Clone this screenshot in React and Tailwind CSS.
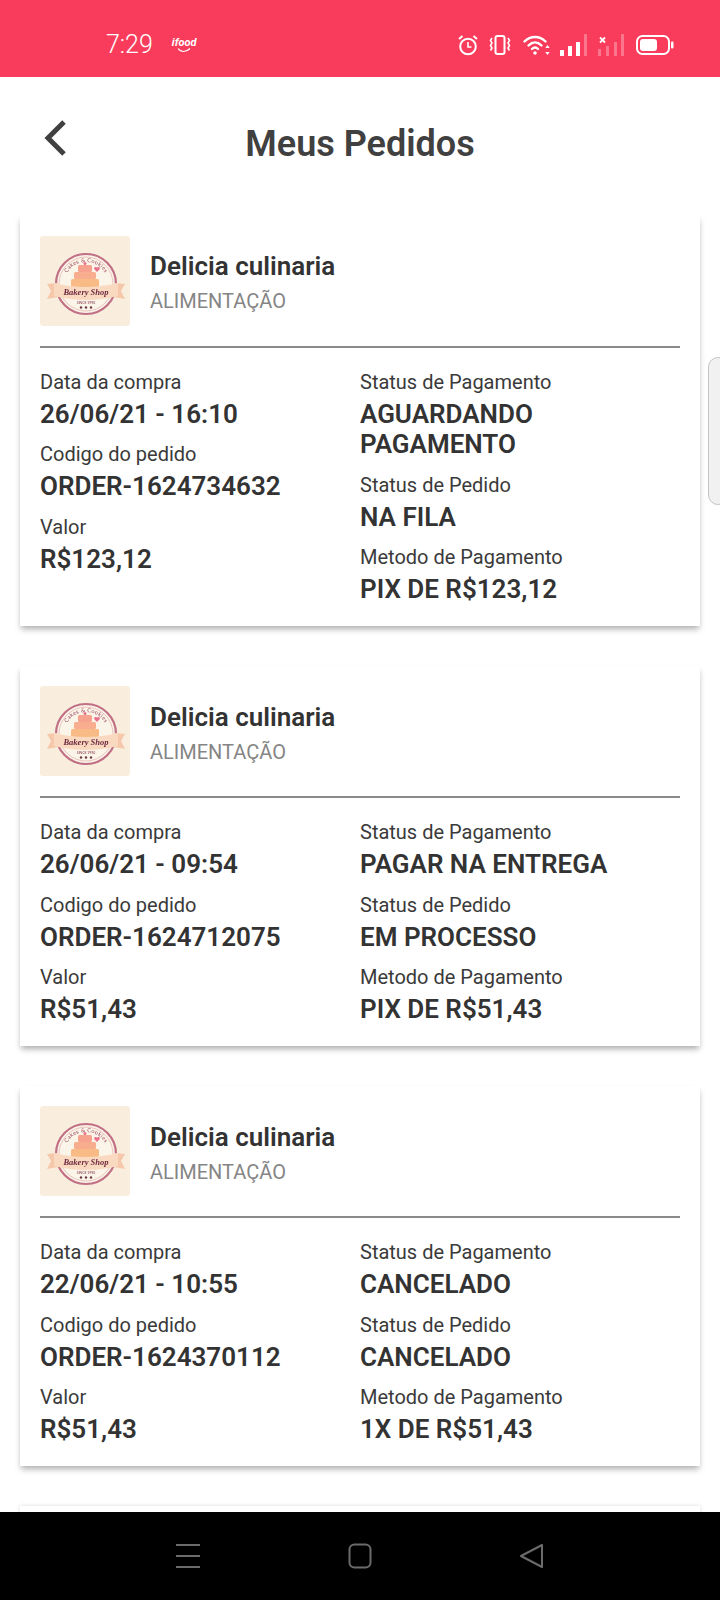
const orders = [
  {
    left: [
      ["Data da compra", "26/06/21 - 16:10"],
      ["Codigo do pedido", "ORDER-1624734632"],
      ["Valor", "R$123,12"],
    ],
    right: [
      ["Status de Pagamento", "AGUARDANDO PAGAMENTO"],
      ["Status de Pedido", "NA FILA"],
      ["Metodo de Pagamento", "PIX DE R$123,12"],
    ],
  },
  {
    left: [
      ["Data da compra", "26/06/21 - 09:54"],
      ["Codigo do pedido", "ORDER-1624712075"],
      ["Valor", "R$51,43"],
    ],
    right: [
      ["Status de Pagamento", "PAGAR NA ENTREGA"],
      ["Status de Pedido", "EM PROCESSO"],
      ["Metodo de Pagamento", "PIX DE R$51,43"],
    ],
  },
  {
    left: [
      ["Data da compra", "22/06/21 - 10:55"],
      ["Codigo do pedido", "ORDER-1624370112"],
      ["Valor", "R$51,43"],
    ],
    right: [
      ["Status de Pagamento", "CANCELADO"],
      ["Status de Pedido", "CANCELADO"],
      ["Metodo de Pagamento", "1X DE R$51,43"],
    ],
  },
];

function BakeryLogo({ id }) {
  return (
    <div className="w-[90px] h-[90px] shrink-0 rounded-[3px] bg-[#f9eedd]">
      <svg viewBox="0 0 90 90" className="w-full h-full blur-[0.35px]">
        <circle cx="46" cy="48" r="30" fill="#fbf4e8" stroke="#c06f85" strokeWidth="2.2" />
        <circle cx="46" cy="48" r="27" fill="none" stroke="#e3b0ad" strokeWidth="0.7" />
        <path id={id} d="M24 48 A22 22 0 0 1 68 48" fill="none" />
        <text fontSize="5.6" fill="#9c4a60" fontFamily="Lato, sans-serif" letterSpacing="0.3">
          <textPath href={`#${id}`} startOffset="50%" textAnchor="middle">Cakes &amp; Cookies</textPath>
        </text>
        <circle cx="45" cy="27.500" r="1.500" fill="#e8708a" />
        <rect x="38" y="29" width="14" height="7" rx="1.500" fill="#f6a28f" />
        <rect x="34" y="36" width="22" height="7" rx="1.500" fill="#f8ae8e" />
        <rect x="31" y="43" width="28" height="8" rx="1.500" fill="#f9bb85" />
        <path d="M57 36l-2.600-2.700a1.500 1.500 0 0 1 2.200-2l.4.4.4-.4a1.500 1.500 0 0 1 2.200 2z" fill="#e8708a" />
        <path d="M7 48 L17 47 L18 61 L7 63 L11 55 Z" fill="#f6c8ab" />
        <path d="M85 48 L75 47 L74 61 L85 63 L81 55 Z" fill="#f6c8ab" />
        <path d="M14 47 Q46 55 78 47 L78 60 Q46 68 14 60 Z" fill="#fad9c1" />
        <text x="46" y="59" textAnchor="middle" fontSize="8.500" fontWeight="700" fontStyle="italic" fill="#6e2a40" fontFamily="Liberation Serif, serif">
          Bakery Shop
        </text>
        <text x="46" y="68" textAnchor="middle" fontSize="3.400" fill="#7c2c45" fontFamily="Lato, sans-serif">
          SINCE 1990
        </text>
        <circle cx="41" cy="71.500" r="1.200" fill="#6d3a4a" />
        <circle cx="46" cy="71.500" r="1.200" fill="#6d3a4a" />
        <circle cx="51" cy="71.500" r="1.200" fill="#6d3a4a" />
      </svg>
    </div>
  );
}

function Field({ label, value }) {
  return (
    <div className="mb-[14px]">
      <p className="text-[20px] leading-[22px] mb-[6px] text-[#3a3a3a]">{label}</p>
      <p className="text-[26px] leading-[30.5px] font-semibold text-[#333333]">{value}</p>
    </div>
  );
}

function OrderCard({ order, index }) {
  return (
    <div className="mb-[40px] bg-white px-[20px] pt-[20.5px] pb-[7px] shadow-[0_4px_6px_-1px_rgba(0,0,0,0.32)]">
      <div className="flex items-center h-[90px] gap-[20px]">
        <BakeryLogo id={`logo-arc-${index}`} />
        <div className="mt-[4px]">
          <p className="text-[26px] leading-[32px] font-semibold text-[#333333]">Delicia culinaria</p>
          <p className="text-[20px] leading-[28px] mt-[5px] text-[#858585]">ALIMENTAÇÃO</p>
        </div>
      </div>
      <div className="h-[2px] bg-[#8a8a8a] mt-[20px] mb-[23px]" />
      <div className="grid grid-cols-[320px_1fr]">
        <div>
          {order.left.map(([label, value]) => (
            <Field key={label} label={label} value={value} />
          ))}
        </div>
        <div>
          {order.right.map(([label, value]) => (
            <Field key={label} label={label} value={value} />
          ))}
        </div>
      </div>
    </div>
  );
}

function StatusIcons() {
  return (
    <div className="flex items-center text-white">
      {/* alarm */}
      <svg width="20" height="22" viewBox="0 0 20 22" fill="none" stroke="currentColor" strokeWidth="2">
        <circle cx="10" cy="12.500" r="7.800" />
        <path d="M10 8v5h3.500" strokeWidth="1.600" />
        <path d="M1 5l3.500-3M19 5l-3.500-3" />
      </svg>
      {/* vibrate */}
      <svg width="22" height="20" viewBox="0 0 22 20" fill="none" stroke="currentColor" strokeWidth="1.600" className="ml-[11px]">
        <rect x="6.500" y="1" width="9" height="18" rx="2" strokeWidth="2" />
        <path d="M3 3l-1.500 2.500L3 8l-1.500 2.500L3 13l-1.500 2.500M19 3l1.500 2.500L19 8l1.500 2.500L19 13l1.500 2.500" />
      </svg>
      {/* wifi */}
      <svg width="28" height="22" viewBox="0 0 28 22" fill="none" stroke="currentColor" strokeWidth="2.400" strokeLinecap="round" className="ml-[12px]">
        <path d="M1.500 7.500C7.500 1.500 16.500 1.500 22.500 7.500" />
        <path d="M5.500 11.500C9.500 7.500 14.500 7.500 18.500 11.500" />
        <path d="M9 15c2-2 4-2 6 0" />
        <circle cx="12" cy="19" r="1.800" fill="currentColor" stroke="none" />
        <path d="M24.500 11l-2.200 3h4.400zM24.500 21l-2.200-3h4.400z" fill="currentColor" stroke="none" />
      </svg>
      {/* signal 1 */}
      <svg width="27" height="22" viewBox="0 0 27 22" fill="currentColor" className="ml-[9px]">
        <rect x="0" y="16" width="4" height="6" />
        <rect x="8" y="12" width="4" height="10" />
        <rect x="16" y="8" width="4" height="14" />
        <rect x="24" y="0" width="3" height="22" opacity="0.3" />
      </svg>
      {/* signal 2, no service */}
      <svg width="26" height="22" viewBox="0 0 26 22" fill="currentColor" className="ml-[11px]">
        <path d="M2 3.500l5 5M7 3.500l-5 5" stroke="currentColor" strokeWidth="1.800" />
        <rect x="0" y="15" width="3" height="7" opacity="0.3" />
        <rect x="8" y="12" width="3" height="10" opacity="0.3" />
        <rect x="16" y="8" width="3" height="14" opacity="0.3" />
        <rect x="23" y="0" width="3" height="22" opacity="0.3" />
      </svg>
      {/* battery */}
      <svg width="38" height="20" viewBox="0 0 38 20" fill="none" className="ml-[12px]">
        <rect x="1" y="1" width="32" height="18" rx="5.500" stroke="currentColor" strokeWidth="2" />
        <rect x="4" y="4" width="17" height="12" rx="3" fill="currentColor" />
        <rect x="35" y="6.500" width="2.500" height="7" rx="1" fill="currentColor" />
      </svg>
    </div>
  );
}

export default function App() {
  return (
    <div className="relative flex flex-col w-[720px] h-[1600px] overflow-hidden bg-white font-['Roboto',sans-serif]">
      {/* Status bar */}
      <div className="flex items-center justify-between h-[77px] shrink-0 bg-[#f93c5c] pl-[106px] pr-[46px] pt-[13px]">
        <div className="flex items-center">
          <span className="text-[25px] leading-[28px] font-light text-white">7:29</span>
          <div className="ml-[19px] flex flex-col items-center">
            <span className="text-[11px] leading-[10px] font-bold italic text-white">ifood</span>
            <svg width="14" height="5" viewBox="0 0 14 5" fill="none" stroke="white" strokeWidth="1.200">
              <path d="M1 .5c3 4 8 4 12 0" />
            </svg>
          </div>
        </div>
        <StatusIcons />
      </div>

      {/* Header */}
      <div className="grid grid-cols-[1fr_auto_1fr] items-center h-[138px] shrink-0">
        <svg width="24" height="38" viewBox="0 0 24 38" fill="none" stroke="#404040" strokeWidth="5" className="ml-[43px] -mt-[17px]">
          <path d="M21 3L5 19l16 16" />
        </svg>
        <h1 className="text-[36px] leading-[40px] font-semibold text-[#404040] -mt-[4px]">Meus Pedidos</h1>
      </div>

      {/* Orders */}
      <div className="flex-1 overflow-hidden px-[20px]">
        {orders.map((order, index) => (
          <OrderCard key={order.left[1][1]} order={order} index={index} />
        ))}
        <div className="h-[40px] bg-white shadow-[0_0_4px_rgba(0,0,0,0.15)]" />
      </div>

      {/* Nav bar */}
      <div className="flex items-center justify-center gap-[146px] h-[88px] shrink-0 bg-black">
        <svg width="26" height="26" viewBox="0 0 26 26" fill="#6b6b6b">
          <rect x="1" y="1" width="24" height="2" />
          <rect x="1" y="12" width="24" height="2" />
          <rect x="1" y="23" width="24" height="2" />
        </svg>
        <svg width="26" height="26" viewBox="0 0 26 26" fill="none" stroke="#6b6b6b" strokeWidth="2">
          <rect x="2.500" y="1.500" width="21" height="23" rx="5" />
        </svg>
        <svg width="26" height="26" viewBox="0 0 26 26" fill="none" stroke="#6b6b6b" strokeWidth="2" strokeLinejoin="round">
          <path d="M23 2L2 13l21 11z" />
        </svg>
      </div>

      {/* Edge panel handle */}
      <div className="absolute left-[708px] top-[357px] w-[20px] h-[148px] rounded-[10px] bg-[#f1f1f1] border border-[#c4c4c4]" />
    </div>
  );
}
